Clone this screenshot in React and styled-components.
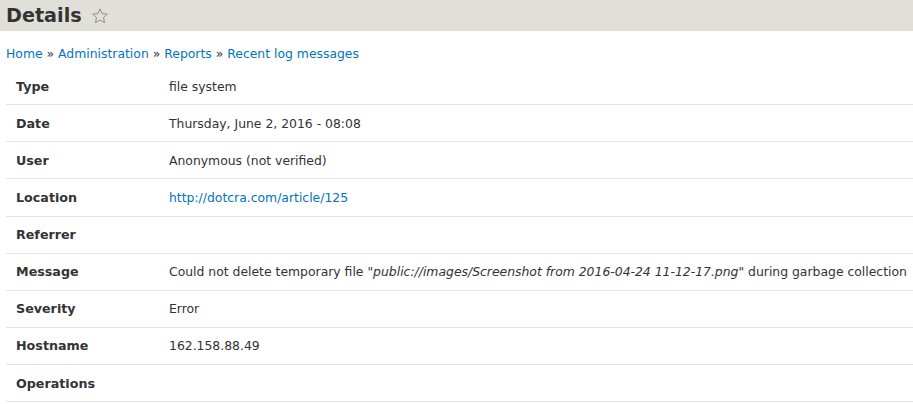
import React from "react";
import styled, { createGlobalStyle } from "styled-components";

const Global = createGlobalStyle`
  body { margin: 0; background: #fff; font-family: "DejaVu Sans", sans-serif; color: #333; }
`;

const Header = styled.div`
  background: #e0e0d8;
  height: 31px;
  display: flex;
  align-items: center;
  padding-left: 6px;
  gap: 9px;
`;

const Title = styled.h1`
  margin: 0;
  font-size: 19.2px;
  font-weight: bold;
  color: #333;
  line-height: 31px;
`;

const Content = styled.div`
  padding: 15px 0 0 6px;
`;

const Crumbs = styled.div`
  font-size: 12.4px;
  line-height: 16px;
  color: #333;
  margin-bottom: 6px;
`;

const Link = styled.a`
  color: #0074bd;
  text-decoration: none;
`;

const Table = styled.div`
  display: flex;
  flex-direction: column;
`;

const Row = styled.div`
  display: grid;
  grid-template-columns: 163px 1fr;
  height: 36.125px;
  align-items: center;
  border-bottom: 1px solid #e6e4df;
  font-size: 12.4px;
  white-space: nowrap;
`;

const Label = styled.div`
  font-weight: bold;
  font-size: 12.7px;
  padding-left: 10px;
`;

const Value = styled.div``;

const Star = () => (
  <svg width="18" height="18" viewBox="0 0 24 24">
    <path
      d="M12 2.5l2.9 6.3 6.9.7-5.2 4.6 1.5 6.8L12 17.4l-6.1 3.5 1.5-6.8L2.2 9.5l6.9-.7z"
      fill="none"
      stroke="#8f8f80"
      strokeWidth="1.3"
      strokeLinejoin="round"
    />
  </svg>
);

const rows = [
  ["Type", "file system"],
  ["Date", "Thursday, June 2, 2016 - 08:08"],
  ["User", "Anonymous (not verified)"],
  ["Location", <Link href="#">http://dotcra.com/article/125</Link>],
  ["Referrer", ""],
  [
    "Message",
    <>
      Could not delete temporary file "<em>public://images/Screenshot from 2016-04-24 11-12-17.png</em>" during garbage collection
    </>,
  ],
  ["Severity", "Error"],
  ["Hostname", "162.158.88.49"],
  ["Operations", ""],
];

export default function App() {
  return (
    <>
      <Global />
      <Header>
        <Title>Details</Title>
        <Star />
      </Header>
      <Content>
        <Crumbs>
          <Link href="#">Home</Link> » <Link href="#">Administration</Link> »{" "}
          <Link href="#">Reports</Link> » <Link href="#">Recent log messages</Link>
        </Crumbs>
        <Table>
          {rows.map(([k, v]) => (
            <Row key={k}>
              <Label>{k}</Label>
              <Value>{v}</Value>
            </Row>
          ))}
        </Table>
      </Content>
    </>
  );
}
